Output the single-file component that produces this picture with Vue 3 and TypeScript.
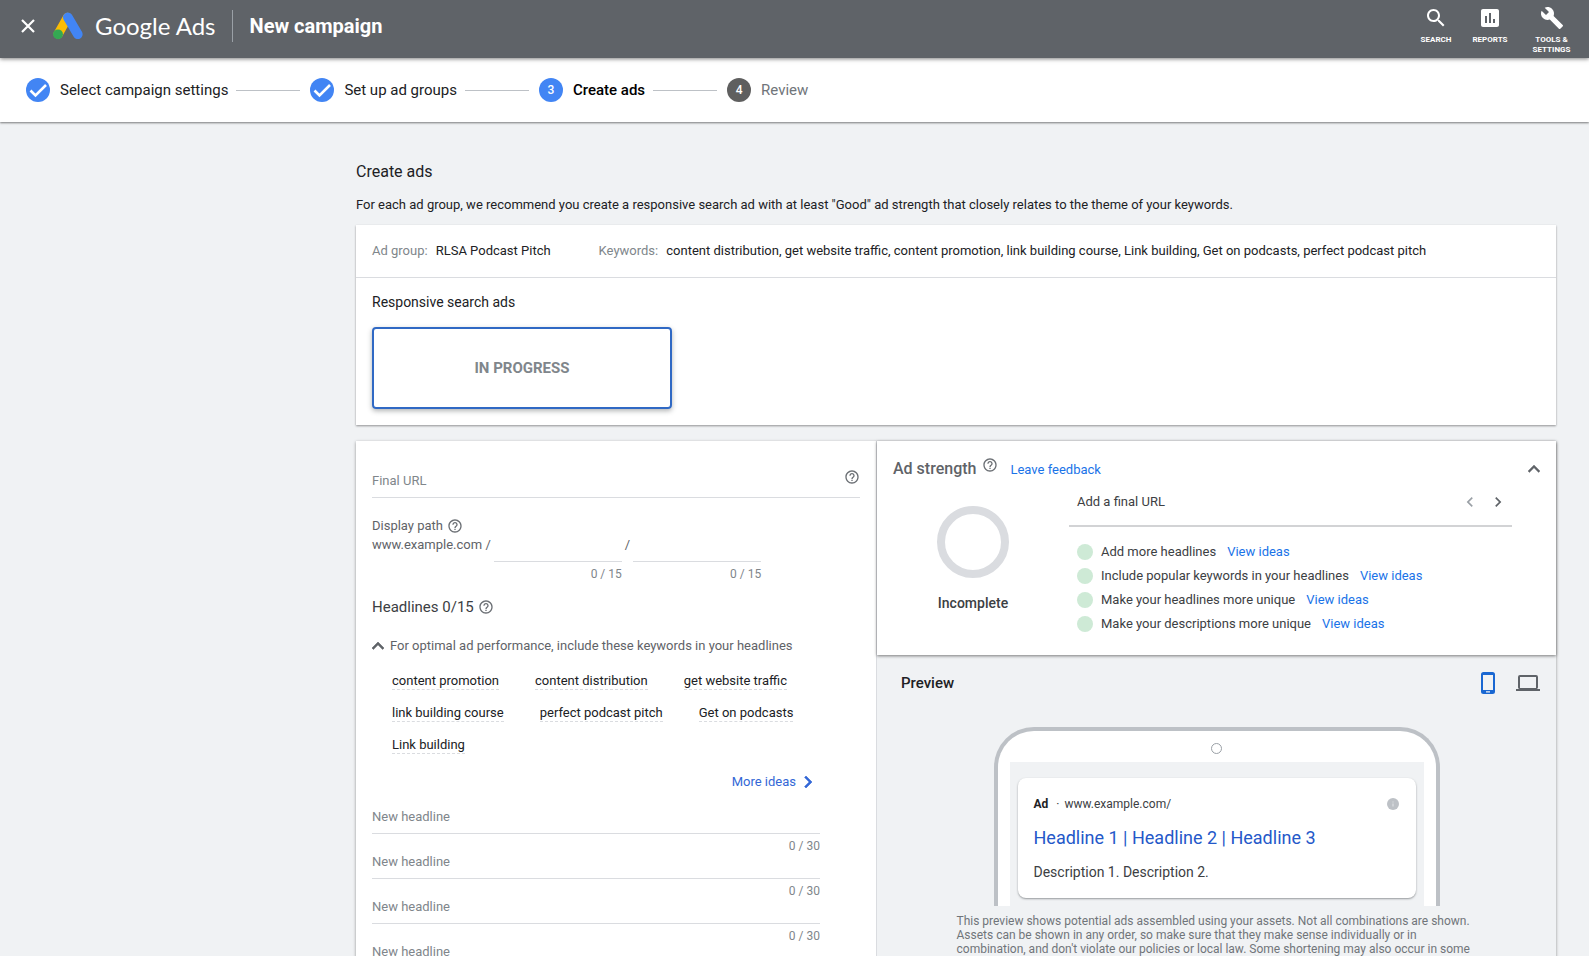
<script setup lang="ts">
import { ref } from 'vue'

interface Step {
  label: string
  state: 'done' | 'current' | 'todo'
}

const steps: Step[] = [
  { label: 'Select campaign settings', state: 'done' },
  { label: 'Set up ad groups', state: 'done' },
  { label: 'Create ads', state: 'current' },
  { label: 'Review', state: 'todo' },
]

const keywords: string[] = [
  'content promotion',
  'content distribution',
  'get website traffic',
  'link building course',
  'perfect podcast pitch',
  'Get on podcasts',
  'Link building',
]

const tips: string[] = [
  'Add more headlines',
  'Include popular keywords in your headlines',
  'Make your headlines more unique',
  'Make your descriptions more unique',
]

const finalUrl = ref('')
const paths = ref<string[]>(['', ''])
const headlines = ref<string[]>(['', '', '', ''])

const helpIcon =
  'M11 18h2v-2h-2v2zm1-16C6.48 2 2 6.48 2 12s4.48 10 10 10 10-4.48 10-10S17.52 2 12 2zm0 18c-4.41 0-8-3.59-8-8s3.59-8 8-8 8 3.59 8 8-3.59 8-8 8zm0-14c-2.21 0-4 1.79-4 4h2c0-1.1.9-2 2-2s2 .9 2 2c0 2-3 1.75-3 5h2c0-2.25 3-2.5 3-5 0-2.21-1.79-4-4-4z'
const upIcon = 'M12 8l-6 6 1.41 1.41L12 10.83l4.59 4.58L18 14z'
const leftIcon = 'M15.41 7.41L14 6l-6 6 6 6 1.41-1.41L10.83 12z'
const rightIcon = 'M10 6L8.59 7.41 13.17 12l-4.58 4.59L10 18l6-6z'
</script>

<template>
  <div class="page">
    <header class="topbar">
      <button class="icon-btn close" aria-label="Close">
        <svg viewBox="0 0 14 14" width="14" height="14">
          <path d="M1 1L13 13M13 1L1 13" fill="none" stroke="#fff" stroke-width="2.2" />
        </svg>
      </button>
      <svg class="logo" viewBox="0 0 30 28" width="30" height="28" aria-hidden="true">
        <path d="M14.5 5.5L5.2 22" stroke="#fbbc04" stroke-width="9.4" stroke-linecap="round" />
        <path d="M14.8 5.3L24.8 22.3" stroke="#4285f4" stroke-width="9.6" stroke-linecap="round" />
        <circle cx="5" cy="22.3" r="4.9" fill="#34a853" />
      </svg>
      <span class="brand">Google Ads</span>
      <h1 class="page-name">New campaign</h1>
      <nav class="tools">
        <button class="tool">
          <svg viewBox="0 0 24 24" width="24" height="24">
            <path
              d="M15.5 14h-.79l-.28-.27C15.41 12.59 16 11.11 16 9.5 16 5.91 13.09 3 9.5 3S3 5.91 3 9.5 5.91 16 9.5 16c1.61 0 3.09-.59 4.23-1.57l.27.28v.79l5 4.99L20.49 19l-4.99-5zm-6 0C7.01 14 5 11.99 5 9.5S7.01 5 9.5 5 14 7.01 14 9.5 11.99 14 9.5 14z"
            />
          </svg>
          <span>SEARCH</span>
        </button>
        <button class="tool">
          <svg viewBox="0 0 24 24" width="24" height="24">
            <path
              d="M19 3H5c-1.1 0-2 .9-2 2v14c0 1.1.9 2 2 2h14c1.1 0 2-.9 2-2V5c0-1.1-.9-2-2-2zM9 17H7v-7h2v7zm4 0h-2V7h2v10zm4 0h-2v-4h2v4z"
            />
          </svg>
          <span>REPORTS</span>
        </button>
        <button class="tool">
          <svg viewBox="0 0 24 24" width="24" height="24">
            <path
              d="M22.7 19l-9.1-9.1c.9-2.3.4-5-1.5-6.9-2-2-5-2.4-7.4-1.3L9 6 6 9 1.6 4.7C.4 7.1.9 10.1 2.9 12.1c1.9 1.9 4.6 2.4 6.9 1.5l9.1 9.1c.4.4 1 .4 1.4 0l2.3-2.3c.5-.4.5-1.1.1-1.4z"
            />
          </svg>
          <span>TOOLS &amp;<br />SETTINGS</span>
        </button>
      </nav>
    </header>

    <ol class="stepper">
      <li v-for="(step, i) in steps" :key="step.label" class="step" :class="step.state">
        <span class="bullet">
          <svg v-if="step.state === 'done'" viewBox="0 0 24 24" width="24" height="24">
            <path d="M4.5 12.5L9.5 17.5L20 7" fill="none" stroke="#fff" stroke-width="2.6" />
          </svg>
          <template v-else>{{ i + 1 }}</template>
        </span>
        <span class="step-label">{{ step.label }}</span>
      </li>
    </ol>

    <main class="content">
      <h2 class="title">Create ads</h2>
      <p class="lead">
        For each ad group, we recommend you create a responsive search ad with at least "Good" ad
        strength that closely relates to the theme of your keywords.
      </p>

      <section class="card">
        <div class="group-row">
          <div class="pair adgroup"><span>Ad group:</span><b>RLSA Podcast Pitch</b></div>
          <div class="pair">
            <span>Keywords:</span>
            <b>content distribution, get website traffic, content promotion, link building course, Link building, Get on podcasts, perfect podcast pitch</b>
          </div>
        </div>
        <div class="ads">
          <h3>Responsive search ads</h3>
          <button class="progress">IN PROGRESS</button>
        </div>
      </section>

      <section class="editor">
        <form class="form" @submit.prevent>
          <div class="url-field">
            <input v-model="finalUrl" type="text" placeholder="Final URL" aria-label="Final URL" />
            <svg class="help" viewBox="0 0 24 24"><path :d="helpIcon" /></svg>
          </div>

          <div class="path-title">
            <span>Display path</span>
            <svg class="help" viewBox="0 0 24 24"><path :d="helpIcon" /></svg>
          </div>
          <div class="path-row">
            <span>www.example.com /</span>
            <div class="path-field">
              <input v-model="paths[0]" type="text" maxlength="15" aria-label="Display path 1" />
              <span class="count">{{ paths[0].length }} / 15</span>
            </div>
            <span>/</span>
            <div class="path-field">
              <input v-model="paths[1]" type="text" maxlength="15" aria-label="Display path 2" />
              <span class="count">{{ paths[1].length }} / 15</span>
            </div>
          </div>

          <h3 class="headlines-title">
            Headlines 0/15
            <svg class="help" viewBox="0 0 24 24"><path :d="helpIcon" /></svg>
          </h3>

          <button class="hint" type="button" aria-expanded="true">
            <svg viewBox="6 6 12 12" width="12" height="12"><path :d="upIcon" stroke="#5f6368" stroke-width="0.6" /></svg>
            For optimal ad performance, include these keywords in your headlines
          </button>
          <div class="keywords">
            <button v-for="word in keywords" :key="word" type="button">{{ word }}</button>
          </div>

          <div class="fields">
            <button class="more" type="button">
              More ideas
              <svg viewBox="6 6 12 12" width="12" height="12"><path :d="rightIcon" stroke="#3367d6" stroke-width="0.6" /></svg>
            </button>
            <div v-for="(_, i) in headlines" :key="i" class="headline">
              <input
                v-model="headlines[i]"
                type="text"
                maxlength="30"
                placeholder="New headline"
                :aria-label="`Headline ${i + 1}`"
              />
              <span class="count">{{ headlines[i].length }} / 30</span>
            </div>
          </div>
        </form>

        <div class="side">
          <section class="strength">
            <div class="strength-head">
              <h3>Ad strength</h3>
              <svg class="help" viewBox="0 0 24 24"><path :d="helpIcon" /></svg>
              <a href="#">Leave feedback</a>
              <button class="icon-btn collapse" aria-label="Collapse">
                <svg viewBox="6 6 12 12" width="12" height="12"><path :d="upIcon" stroke="#5f6368" stroke-width="0.4" /></svg>
              </button>
            </div>
            <div class="strength-body">
              <div class="meter">
                <div class="ring"></div>
                <span>Incomplete</span>
              </div>
              <div class="advice">
                <div class="advice-head">
                  <span>Add a final URL</span>
                  <button class="icon-btn muted" aria-label="Previous">
                    <svg viewBox="0 0 24 24" width="20" height="20"><path :d="leftIcon" /></svg>
                  </button>
                  <button class="icon-btn" aria-label="Next">
                    <svg viewBox="0 0 24 24" width="20" height="20"><path :d="rightIcon" /></svg>
                  </button>
                </div>
                <ul>
                  <li v-for="tip in tips" :key="tip">
                    <i class="dot"></i>
                    <span>{{ tip }}</span>
                    <a href="#">View ideas</a>
                  </li>
                </ul>
              </div>
            </div>
          </section>

          <section class="preview">
            <div class="preview-head">
              <h3>Preview</h3>
              <button class="icon-btn" aria-label="Mobile preview">
                <svg viewBox="0 0 24 24" width="24" height="24">
                  <path
                    fill="#1967d2"
                    fill-rule="evenodd"
                    d="M7.5 1h9A2.5 2.5 0 0 1 19 3.500v17a2.500 2.500 0 0 1-2.500 2.500h-9A2.500 2.500 0 0 1 5 20.500v-17A2.500 2.500 0 0 1 7.500 1zM7 4v15h10V4zM10 20.300v1.200h4v-1.200z"
                  />
                </svg>
              </button>
              <button class="icon-btn" aria-label="Desktop preview">
                <svg viewBox="0 0 24 24" width="24" height="24">
                  <path
                    fill="#5f6368"
                    fill-rule="evenodd"
                    d="M4 4h16a2 2 0 0 1 2 2v10a2 2 0 0 1-1 2h3v2H0v-2h3a2 2 0 0 1-1-2V6a2 2 0 0 1 2-2zM4 6v11h16V6z"
                  />
                </svg>
              </button>
            </div>
            <div class="phone">
              <div class="camera"></div>
              <div class="screen">
                <article class="ad">
                  <div class="ad-line">
                    <b>Ad</b><span>·</span><span>www.example.com/</span>
                    <svg viewBox="0 0 12 12" width="12" height="12">
                      <circle cx="6" cy="6" r="6" fill="#bdc1c6" />
                      <path d="M5.500 5.500h1v3h-1zM5.500 3.500h1v1h-1z" fill="#e4e6e8" />
                    </svg>
                  </div>
                  <a class="ad-title" href="#">Headline 1 | Headline 2 | Headline 3</a>
                  <p>Description 1. Description 2.</p>
                </article>
              </div>
            </div>
            <p class="note">
              This preview shows potential ads assembled using your assets. Not all combinations are
              shown. Assets can be shown in any order, so make sure that they make sense individually
              or in combination, and don't violate our policies or local law. Some shortening may also
              occur in some
            </p>
          </section>
        </div>
      </section>
    </main>
  </div>
</template>

<style>
body {
  margin: 0;
  background: #f0f2f4;
}
</style>

<style scoped>
* {
  box-sizing: border-box;
}
h1,
h2,
h3,
p,
ol,
ul {
  margin: 0;
  padding: 0;
  list-style: none;
  font-weight: 400;
}
.page {
  height: 100vh;
  overflow: hidden;
  background: #f0f2f4;
  font: 13px/20px Roboto, 'Liberation Sans', sans-serif;
  color: #202124;
}
button,
input {
  font: inherit;
  color: inherit;
  border: 0;
  padding: 0;
  margin: 0;
  background: none;
  border-radius: 0;
  outline: 0;
}
input::placeholder {
  color: #80868b;
  opacity: 1;
}
a {
  color: #1a73e8;
  text-decoration: none;
}
svg {
  display: block;
  flex: none;
  fill: currentColor;
}
.icon-btn {
  display: flex;
  align-items: center;
  justify-content: center;
  color: #5f6368;
}
.help {
  width: 16px;
  height: 16px;
  color: #6b6f74;
}
.count {
  margin-top: 5px;
  font-size: 12px;
  line-height: 14px;
  color: #80868b;
}

.topbar {
  position: relative;
  display: flex;
  align-items: flex-start;
  height: 58px;
  padding: 0 10px 0 21px;
  background: #5f6368;
  color: #fff;
  box-shadow: 0 1px 4px rgba(0, 0, 0, 0.5);
}
.close,
.logo,
.brand,
.page-name {
  height: 32px;
  margin-top: 10px;
}
.logo {
  width: 30px;
  margin-left: 18px;
  fill: none;
}
.brand {
  margin-left: 12px;
  font: 24px/32px Lato, Roboto, sans-serif;
}
.page-name {
  margin-left: 16px;
  padding-left: 17px;
  border-left: 1px solid #9aa0a6;
  font-size: 20px;
  line-height: 32px;
  font-weight: 700;
}
.tools {
  display: flex;
  margin-left: auto;
}
.tool {
  display: flex;
  flex-direction: column;
  align-items: center;
  width: 54px;
  padding-top: 6px;
  font-size: 8px;
  line-height: 10px;
  font-weight: 700;
}
.tool:last-child {
  width: 55px;
  margin-left: 7px;
}
.tool span {
  margin-top: 5px;
}

.stepper {
  display: flex;
  align-items: center;
  height: 64px;
  padding-left: 26px;
  background: #fff;
  font-size: 15px;
  box-shadow: 0 1px 2px rgba(0, 0, 0, 0.5);
}
.step {
  display: flex;
  align-items: center;
  gap: 10px;
}
.step + .step::before {
  content: '';
  width: 64px;
  margin-left: 8px;
  border-top: 1px solid #bdc1c6;
}
.bullet {
  display: flex;
  align-items: center;
  justify-content: center;
  width: 24px;
  height: 24px;
  border-radius: 50%;
  background: #4285f4;
  color: #fff;
  font-size: 12px;
  font-weight: 500;
}
.current .step-label {
  color: #000;
  font-weight: 500;
}
.todo .bullet {
  background: #5f5f5f;
}
.todo .step-label {
  color: #70757a;
}

.content {
  padding: 38px 33px 0 356px;
}
.title {
  font-size: 16px;
  line-height: 24px;
}
.lead {
  margin: 11px 0 10px;
}
.card {
  background: #fff;
  box-shadow: 0 1px 2px rgba(0, 0, 0, 0.4);
}
.group-row {
  display: flex;
  gap: 48px;
  align-items: center;
  min-height: 53px;
  padding: 0 16px;
  border-bottom: 1px solid #dadce0;
}
.pair {
  display: flex;
  gap: 8px;
  color: #80868b;
}
.pair b {
  font-weight: 400;
  color: #202124;
}
.ads {
  padding: 14px 16px 16px;
}
.ads h3 {
  font-size: 14px;
}
.progress {
  display: block;
  width: 300px;
  height: 82px;
  margin-top: 15px;
  border: 2px solid #3069c4;
  border-radius: 4px;
  color: #80868b;
  font-size: 15px;
  font-weight: 700;
  box-shadow: 0 2px 5px rgba(60, 64, 67, 0.4);
}

.editor {
  display: grid;
  grid-template-columns: 13fr 17fr;
  margin-top: 16px;
  box-shadow: 0 1px 3px rgba(0, 0, 0, 0.4);
}
.form {
  padding: 16px;
  background: #fff;
  color: #5f6368;
}
.url-field {
  display: flex;
  align-items: center;
  height: 41px;
  border-bottom: 1px solid #dadce0;
}
.url-field input {
  flex: 1;
  height: 40px;
  padding-top: 6px;
}
.path-title,
.headlines-title {
  display: flex;
  align-items: center;
  gap: 4px;
}
.path-title {
  margin-top: 19px;
  line-height: 18px;
}
.path-row {
  display: flex;
  gap: 3px;
}
.path-field {
  display: flex;
  flex-direction: column;
  width: 128px;
  text-align: right;
}
.path-field input {
  width: 100%;
  height: 27px;
  border-bottom: 1px solid #dadce0;
}
.headlines-title {
  margin-top: 14px;
  font-size: 15px;
  line-height: 24px;
  color: #3c4043;
}
.hint {
  display: flex;
  align-items: center;
  gap: 6px;
  margin-top: 17px;
}
.keywords {
  display: flex;
  flex-wrap: wrap;
  gap: 15px 36px;
  margin: 17px 0 18px;
  padding-left: 20px;
  color: #202124;
}
.keywords button {
  line-height: 16px;
  border-bottom: 1px dashed #dadce0;
}
.fields {
  display: flex;
  flex-direction: column;
  padding-right: 40px;
}
.more {
  display: flex;
  align-items: center;
  align-self: flex-end;
  gap: 6px;
  margin: 0 6px 16px 0;
  color: #3367d6;
}
.headline {
  display: flex;
  flex-direction: column;
  text-align: right;
}
.headline input {
  height: 26px;
  padding-bottom: 9px;
  border-bottom: 1px solid #dadce0;
  line-height: 16px;
}

.side {
  border-left: 1px solid #dadce0;
}
.strength {
  padding: 16px 16px 20px;
  background: #fff;
  box-shadow: 0 1px 3px rgba(0, 0, 0, 0.5);
}
.strength-head {
  display: flex;
  align-items: center;
  height: 24px;
}
.strength-head h3 {
  font-size: 16px;
  font-weight: 500;
  color: #5f6368;
}
.strength-head .help {
  align-self: flex-start;
  margin: 0 12px 0 6px;
}
.strength-head a {
  line-height: 22px;
  align-self: flex-end;
}
.collapse {
  margin-left: auto;
}
.strength-body {
  display: flex;
  gap: 16px;
}
.meter {
  display: flex;
  flex-direction: column;
  align-items: center;
  gap: 15px;
  width: 160px;
  padding-top: 25px;
  font-size: 14px;
  font-weight: 500;
  color: #3c4043;
}
.ring {
  width: 72px;
  height: 72px;
  border: 8px solid #dadce0;
  border-radius: 50%;
}
.advice {
  flex: 1;
  margin-right: 28px;
  color: #3c4043;
}
.advice-head {
  display: flex;
  align-items: center;
  gap: 8px;
  height: 46px;
  padding: 0 4px 2px 8px;
  border-bottom: 2px solid #d2d3d5;
}
.advice-head span {
  flex: 1;
}
.muted {
  color: #9aa0a6;
}
.advice ul {
  padding: 13px 0 0 8px;
}
.advice li {
  display: flex;
  align-items: center;
  height: 24px;
}
.strength {
  padding-bottom: 19px;
}
.dot {
  width: 16px;
  height: 16px;
  margin-right: 8px;
  border-radius: 50%;
  background: #ceead6;
}
.advice li a {
  margin-left: 11px;
}

.preview-head {
  display: flex;
  align-items: center;
  gap: 16px;
  height: 24px;
  margin: 16px 16px 32px 24px;
}
.preview-head h3 {
  flex: 1;
  font-size: 15px;
  font-weight: 500;
}
.phone {
  width: 446px;
  margin: 0 auto;
  padding: 12px 12px 0;
  border: 4px solid #bdc1c6;
  border-bottom: 0;
  border-radius: 40px 40px 0 0;
  background: #fff;
}
.camera {
  width: 11px;
  height: 11px;
  margin: 0 auto 8px;
  border: 1px solid #9aa0a6;
  border-radius: 50%;
}
.screen {
  padding: 16px 8px 8px;
  background: #f0f2f4;
}
.ad {
  display: flex;
  flex-direction: column;
  gap: 12px;
  padding: 16px;
  border-radius: 8px;
  background: #fff;
  box-shadow: 0 1px 2px rgba(60, 64, 67, 0.5);
}
.ad-line {
  display: flex;
  align-items: center;
  gap: 8px;
  font-size: 12px;
  color: #3c4043;
}
.ad-line span + span {
  margin-left: -3px;
}
.ad-line b {
  color: #202124;
}
.ad-line svg {
  margin: 0 1px 0 auto;
}
.ad-title {
  font-size: 18px;
  line-height: 24px;
  color: #2458c9;
}
.ad p {
  font-size: 14px;
  color: #3c4043;
}
.note {
  max-width: 520px;
  margin: 8px auto 0;
  font-size: 12px;
  line-height: 14px;
  color: #70757a;
}
</style>
